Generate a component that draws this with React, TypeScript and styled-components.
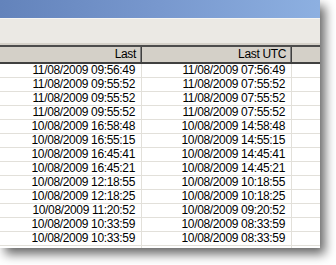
import React from "react";
import styled, { createGlobalStyle } from "styled-components";

const GlobalStyle = createGlobalStyle`
  html, body {
    margin: 0;
    padding: 0;
    background: #ffffff;
    overflow: hidden;
  }
  body {
    font-family: "Liberation Sans", Arial, sans-serif;
  }
`;

const Stage = styled.div`
  width: 336px;
  height: 265px;
  overflow: hidden;
`;

const Window = styled.div`
  width: 320px;
  height: 248px;
  display: flex;
  flex-direction: column;
  overflow: hidden;
  background: #ffffff;
  box-shadow: 5px 6px 10px rgba(0, 0, 0, 0.6);
`;

const TitleBar = styled.div`
  height: 18px;
  flex: none;
  background: linear-gradient(90deg, #6383bb 0%, #7898ce 50%, #8db0e1 100%);
`;

const Toolbar = styled.div`
  height: 24px;
  flex: none;
  background: #ebe9e4;
  border-top: 1px solid #f6f5f2;
  border-bottom: 2px solid #d5d1c9;
`;

const Grid = styled.div`
  flex: 1;
  display: flex;
  flex-direction: column;
  border-top: 2px solid #4c4c4c;
  font-size: 12px;
  letter-spacing: -0.35px;
  color: #000000;
`;

const HeaderRow = styled.div`
  height: 15px;
  flex: none;
  display: grid;
  grid-template-columns: 142px 150px 1fr;
  background: #d4d0c8;
  border-bottom: 2px solid #404040;
`;

const HeaderCell = styled.div<{ $last?: boolean }>`
  display: flex;
  align-items: center;
  justify-content: flex-end;
  padding-right: 6px;
  line-height: 15px;
  box-shadow: ${(p) =>
    p.$last ? "none" : "inset -1px 0 0 #404040, inset -2px 0 0 #808080"};
`;

const Row = styled.div`
  height: 13px;
  flex: none;
  display: grid;
  grid-template-columns: 142px 150px 1fr;
  border-bottom: 1px solid #e2e0da;
`;

const Cell = styled.div`
  display: flex;
  align-items: center;
  justify-content: flex-end;
  padding-right: 6px;
  line-height: 13px;
  border-right: 1px solid #e2e0da;
  white-space: nowrap;
`;

const EmptyCell = styled.div``;

const rows: [string, string][] = [
  ["11/08/2009 09:56:49", "11/08/2009 07:56:49"],
  ["11/08/2009 09:55:52", "11/08/2009 07:55:52"],
  ["11/08/2009 09:55:52", "11/08/2009 07:55:52"],
  ["11/08/2009 09:55:52", "11/08/2009 07:55:52"],
  ["10/08/2009 16:58:48", "10/08/2009 14:58:48"],
  ["10/08/2009 16:55:15", "10/08/2009 14:55:15"],
  ["10/08/2009 16:45:41", "10/08/2009 14:45:41"],
  ["10/08/2009 16:45:21", "10/08/2009 14:45:21"],
  ["10/08/2009 12:18:55", "10/08/2009 10:18:55"],
  ["10/08/2009 12:18:25", "10/08/2009 10:18:25"],
  ["10/08/2009 11:20:52", "10/08/2009 09:20:52"],
  ["10/08/2009 10:33:59", "10/08/2009 08:33:59"],
  ["10/08/2009 10:33:59", "10/08/2009 08:33:59"],
];

export default function App() {
  return (
    <Stage>
      <GlobalStyle />
      <Window>
        <TitleBar />
        <Toolbar />
        <Grid>
          <HeaderRow>
            <HeaderCell>Last</HeaderCell>
            <HeaderCell>Last UTC</HeaderCell>
            <HeaderCell $last />
          </HeaderRow>
          {rows.map((r, i) => (
            <Row key={i}>
              <Cell>{r[0]}</Cell>
              <Cell>{r[1]}</Cell>
              <EmptyCell />
            </Row>
          ))}
          <Row>
            <Cell />
            <Cell />
            <EmptyCell />
          </Row>
        </Grid>
      </Window>
    </Stage>
  );
}
